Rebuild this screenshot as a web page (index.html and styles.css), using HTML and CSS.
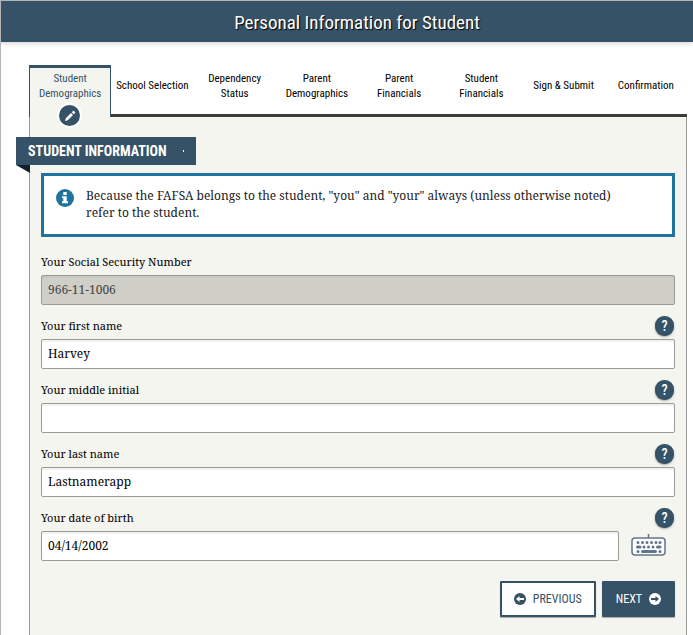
FILE: index.html
```html
<!DOCTYPE html>
<html lang="en">
<head>
    <meta charset="UTF-8">
    <meta name="viewport" content="width=device-width, initial-scale=1.0">
    <title>Personal Information for Student</title>
    <link rel="stylesheet" href="styles.css">
</head>
<body>

<header class="page-header">
    <h1>Personal Information for Student</h1>
</header>

<main class="container">
    <nav class="tabs">
        <a href="#" class="tab active">
            <span>Student<br>Demographics</span>
            <span class="tab-badge">
                <svg width="12" height="12" viewBox="0 0 12 12">
                    <path d="M1 11l.8-2.800 5.200-5.200 2 2L3.800 10.200z M7.800 2.200L9 1c.3-.3.6-.3.9 0l1.100 1.100c.3.300.3.600 0 .9L9.800 4.200z" fill="#fff"/>
                </svg>
            </span>
        </a>
        <a href="#" class="tab">School Selection</a>
        <a href="#" class="tab">Dependency<br>Status</a>
        <a href="#" class="tab">Parent<br>Demographics</a>
        <a href="#" class="tab">Parent<br>Financials</a>
        <a href="#" class="tab">Student<br>Financials</a>
        <a href="#" class="tab">Sign &amp; Submit</a>
        <a href="#" class="tab">Confirmation</a>
    </nav>

    <form class="panel">
        <h2 class="ribbon">STUDENT INFORMATION <span class="ribbon-dot"></span></h2>

        <div class="notice">
            <svg class="notice-icon" width="18" height="18" viewBox="0 0 18 18">
                <circle cx="9" cy="9" r="9" fill="#20739c"/>
                <path d="M7.300 3h3.400v3H7.300z M6 7.200h4.700v5H12v2H6v-2h1.300v-3H6z" fill="#fff"/>
            </svg>
            <p>Because the FAFSA belongs to the student, "you" and "your" always (unless otherwise noted) refer to the student.</p>
        </div>

        <div class="field">
            <div class="field-head">
                <label for="ssn">Your Social Security Number</label>
            </div>
            <input type="text" id="ssn" value="966-11-1006" disabled>
        </div>

        <div class="field">
            <div class="field-head">
                <label for="first-name">Your first name</label>
                <button type="button" class="help-btn" aria-label="Help with first name">?</button>
            </div>
            <input type="text" id="first-name" value="Harvey">
        </div>

        <div class="field">
            <div class="field-head">
                <label for="middle-initial">Your middle initial</label>
                <button type="button" class="help-btn" aria-label="Help with middle initial">?</button>
            </div>
            <input type="text" id="middle-initial" value="">
        </div>

        <div class="field">
            <div class="field-head">
                <label for="last-name">Your last name</label>
                <button type="button" class="help-btn" aria-label="Help with last name">?</button>
            </div>
            <input type="text" id="last-name" value="Lastnamerapp">
        </div>

        <div class="field">
            <div class="field-head">
                <label for="dob">Your date of birth</label>
                <button type="button" class="help-btn" aria-label="Help with date of birth">?</button>
            </div>
            <div class="input-row">
                <input type="text" id="dob" value="04/14/2002">
                <button type="button" class="keyboard-btn" aria-label="Keyboard">
                    <svg width="36" height="24" viewBox="0 0 36 24">
                        <path d="M17.500 0v4" stroke="#60778b" stroke-width="1.500"/>
                        <rect x="1" y="4" width="33" height="17" rx="3" fill="#fff" stroke="#60778b" stroke-width="1.500"/>
                        <path d="M7 8.500h0M11.500 8.500h0M16 8.500h0M20.500 8.500h0M25 8.500h0M29 8.500h0M6.500 13h2.500M13 13h0M17.500 13h0M22 13h0M26.500 13h2.500M7 17.500h0M11.500 17.500h13M29 17.500h0" fill="none" stroke="#60778b" stroke-width="3" stroke-linecap="round"/>
                    </svg>
                </button>
            </div>
        </div>

        <div class="buttons">
            <button type="button" class="btn btn-outline">
                <svg width="12" height="12" viewBox="0 0 12 12">
                    <circle cx="6" cy="6" r="6" fill="#365266"/>
                    <path d="M2 6l3.500-3v2H10v2H5.500v2z" fill="#fff"/>
                </svg>
                PREVIOUS
            </button>
            <button type="button" class="btn">
                NEXT
                <svg width="12" height="12" viewBox="0 0 12 12">
                    <circle cx="6" cy="6" r="6" fill="#fff"/>
                    <path d="M10 6L6.500 3v2H2v2h4.500v2z" fill="#365266"/>
                </svg>
            </button>
        </div>
    </form>
</main>

</body>
</html>
```

FILE: styles.css
```css
:root {
    --navy: #365266;
    --blue: #20739c;
    --panel-bg: #f4f5ef;
    --border: #999b9b;
    --sans: "Liberation Sans Narrow", "Roboto Condensed", "Arial Narrow", sans-serif;
    --serif: "Noto Serif", "Droid Serif", "DejaVu Serif Condensed", "DejaVu Serif", serif;
}

* {
    box-sizing: border-box;
}

body {
    margin: 0;
    min-height: 100vh;
    display: flex;
    flex-direction: column;
    border-top: 1px solid #b5b5b5;
    border-left: 1px solid #b5b5b5;
    background-color: #fff;
    font-family: var(--serif);
    color: #111;
}

/* Header */
.page-header {
    padding-left: 20px;
    background-color: var(--navy);
    box-shadow: 0 1px 5px rgba(0, 0, 0, 0.2);
    text-align: center;
}

.page-header h1 {
    margin: 0;
    padding-top: 2px;
    font-family: var(--sans);
    font-size: 19px;
    font-weight: normal;
    line-height: 39px;
    color: #fff;
    text-shadow: 1px 1px 1px #000;
}

.container {
    flex: 1;
    display: flex;
    flex-direction: column;
    margin: 23px 6px 0 28px;
}

/* Tabs */
.tabs {
    display: grid;
    grid-template-columns: repeat(8, 1fr);
    height: 52px;
}

.tab {
    display: flex;
    align-items: center;
    justify-content: center;
    padding-bottom: 8px;
    border-bottom: 3px solid #3b3b3b;
    font-family: var(--sans);
    font-size: 11px;
    line-height: 15px;
    text-align: center;
    text-decoration: none;
    color: #000;
}

.tab.active {
    position: relative;
    padding-bottom: 14px;
    border: 1px solid var(--navy);
    border-top-width: 3px;
    border-bottom: 0;
    background-color: var(--panel-bg);
    color: var(--navy);
}

.tab-badge {
    position: absolute;
    bottom: -11px;
    left: 50%;
    margin-left: -13px;
    width: 25px;
    height: 25px;
    display: flex;
    align-items: center;
    justify-content: center;
    border: 2px solid #fff;
    border-radius: 50%;
    background-color: var(--navy);
}

/* Form panel */
.panel {
    flex: 1;
    padding: 20px 11px 18px;
    border: 1px solid var(--border);
    border-top: 0;
    border-bottom: 0;
    background-color: var(--panel-bg);
}

.ribbon {
    position: relative;
    width: 180px;
    height: 28px;
    margin: 0 0 8px -25px;
    padding: 0 12px;
    display: flex;
    align-items: center;
    justify-content: space-between;
    background-color: var(--navy);
    font-family: var(--sans);
    font-size: 14px;
    white-space: nowrap;
    color: #fff;
}

.ribbon::after {
    content: "";
    position: absolute;
    top: 100%;
    left: 0;
    border-top: 8px solid #14212c;
    border-left: 14px solid transparent;
}

.ribbon-dot {
    width: 1px;
    height: 2px;
    background-color: #fff;
}

.notice {
    display: flex;
    gap: 12px;
    min-height: 64px;
    padding: 11px 40px 11px 12px;
    border: 3px solid var(--blue);
    background-color: #fff;
    font-size: 12px;
    line-height: 17px;
    color: #222;
}

.notice-icon {
    flex: none;
    margin-top: 2px;
}

.notice p {
    margin: 0;
}

/* Fields */
.field {
    margin-top: 11px;
}

.notice + .field {
    margin-top: 15px;
}

.field-head {
    display: flex;
    align-items: center;
    justify-content: space-between;
    height: 20px;
    margin-bottom: 3px;
    padding-right: 1px;
}

.field-head label {
    font-size: 11px;
    line-height: 20px;
    color: #000;
}

.field input {
    display: block;
    width: 100%;
    height: 30px;
    padding: 0 6px 2px;
    border: 1px solid var(--border);
    border-radius: 2px;
    background-color: #fff;
    box-shadow: inset 0 2px 1px #f2f2f2;
    font-family: var(--serif);
    font-size: 12px;
    color: #000;
}

.field input:disabled {
    background-color: #cfcfc7;
    box-shadow: inset 0 2px 1px #c8c8c2;
    color: #444;
}

.help-btn {
    width: 19px;
    height: 20px;
    padding: 0;
    border: 0;
    border-radius: 9px;
    background-color: var(--navy);
    box-shadow: 0 1px 2px rgba(0, 0, 0, 0.3);
    font-family: var(--sans);
    font-size: 14px;
    font-weight: 500;
    line-height: 20px;
    color: #fff;
}

.input-row {
    display: flex;
    align-items: center;
}

.keyboard-btn {
    flex: none;
    width: 56px;
    height: 24px;
    padding: 0 8px 0 12px;
    border: 0;
    background: none;
}

.keyboard-btn svg {
    display: block;
}

/* Bottom buttons */
.buttons {
    display: flex;
    justify-content: flex-end;
    gap: 6px;
    margin-top: 20px;
}

.btn {
    display: flex;
    align-items: center;
    gap: 7px;
    height: 36px;
    padding: 0 12px;
    border: 2px solid var(--navy);
    border-radius: 1px;
    background-color: var(--navy);
    box-shadow: 0 1px 1px rgba(0, 0, 0, 0.3);
    font-family: var(--sans);
    font-size: 12px;
    color: #fff;
}

.btn-outline {
    background-color: #fff;
    color: var(--navy);
}
```
